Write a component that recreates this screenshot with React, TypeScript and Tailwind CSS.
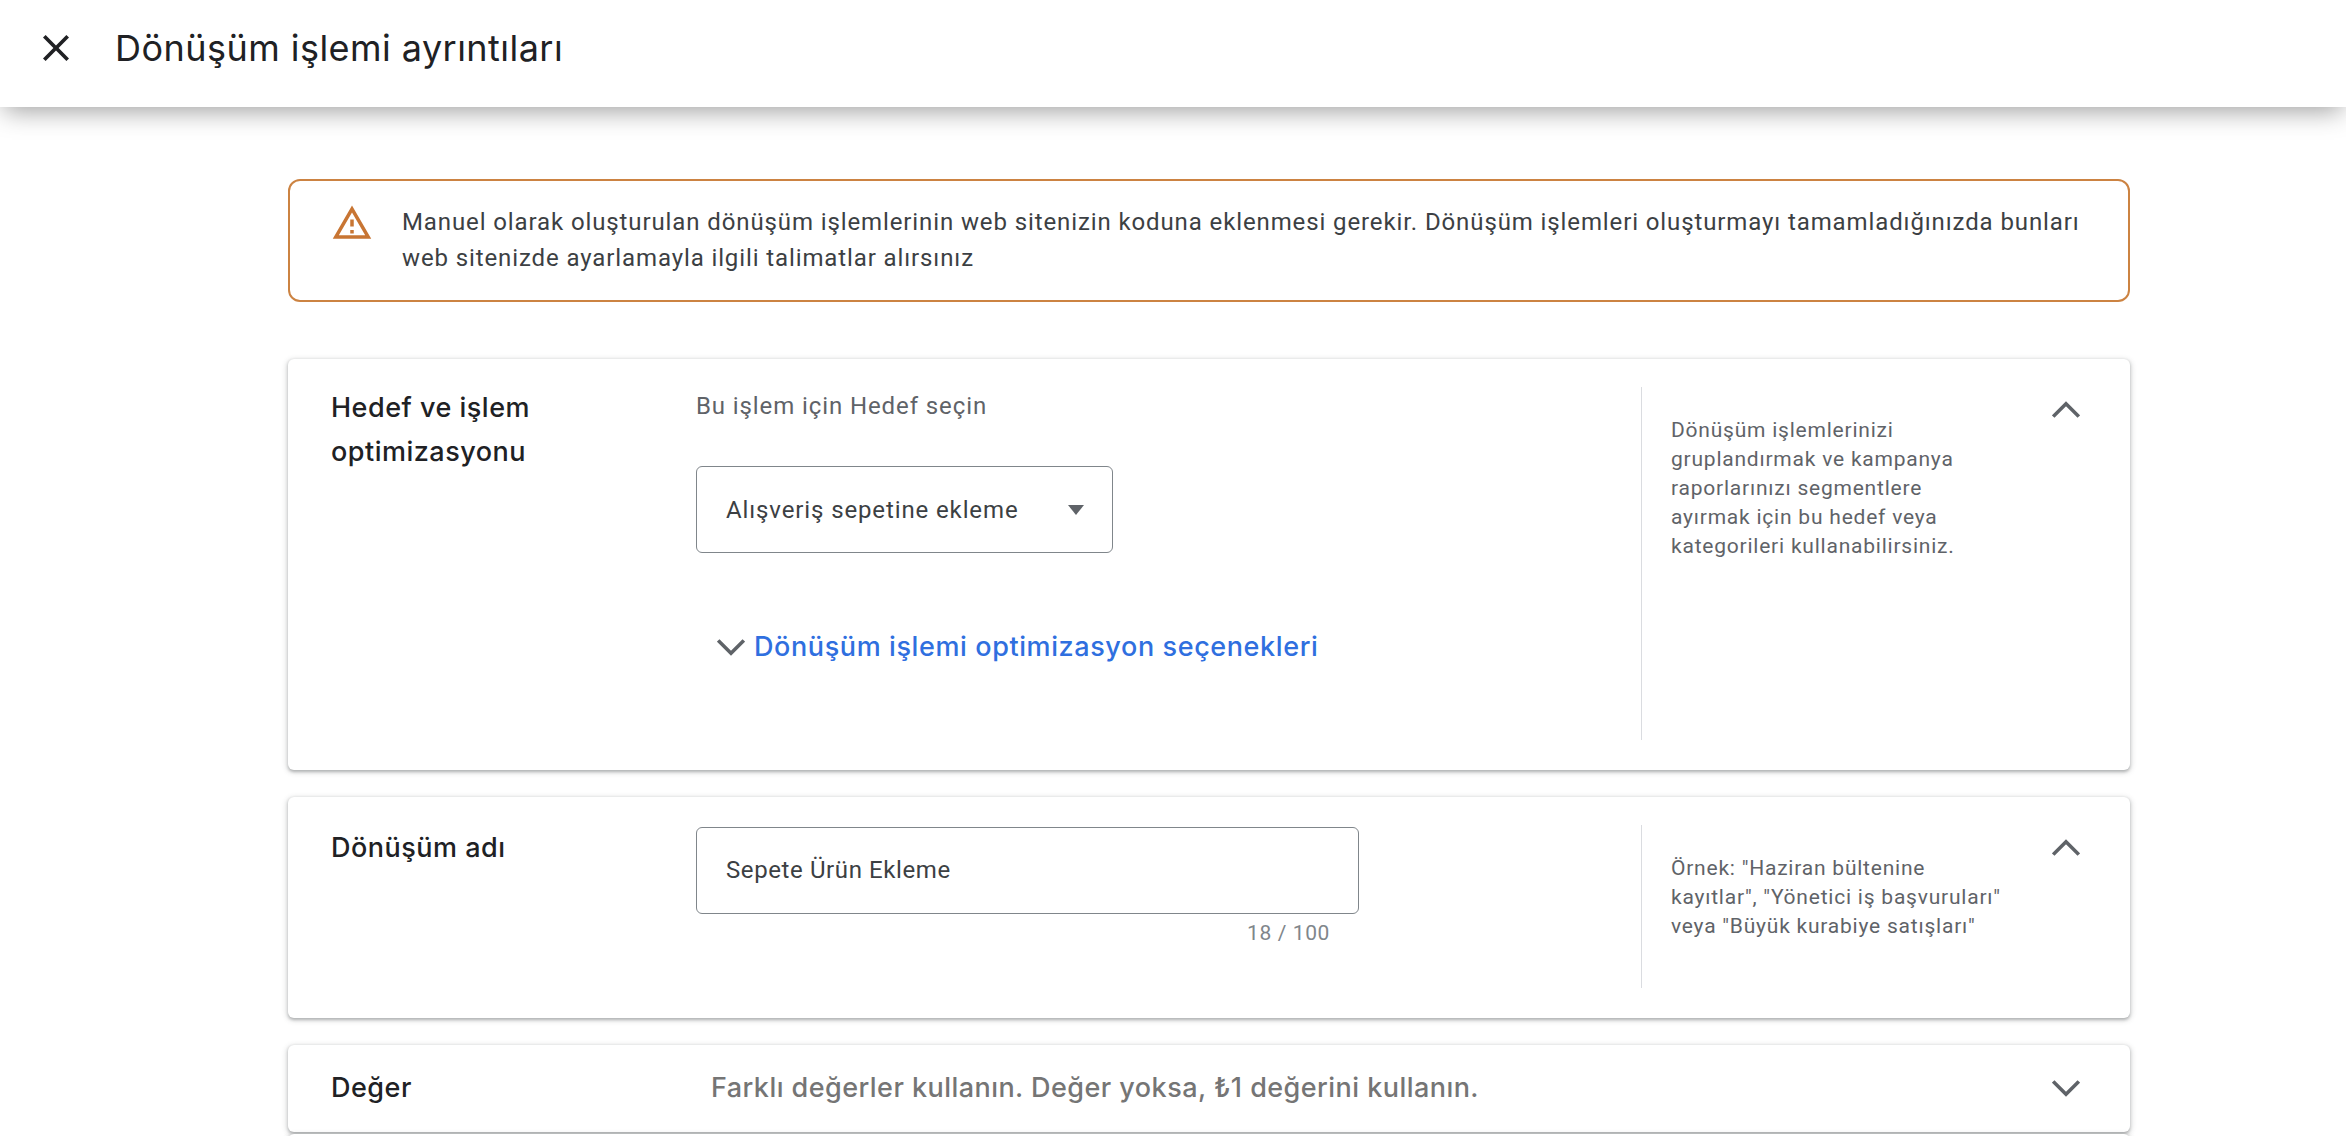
const roboto = "font-['Roboto',sans-serif]";
const display = "font-['Inter',sans-serif]";
const cardShadow = "shadow-[0_1.5px_3px_rgba(60,64,67,0.3),0_1.5px_5px_1.5px_rgba(60,64,67,0.15)]";

function Chevron({ up = false, className = "" }: { up?: boolean; className?: string }) {
  return (
    <svg viewBox="0 0 28 17" className={`h-[17px] w-[28px] shrink-0 ${className}`} fill="none" stroke="#5f6368" strokeWidth="3.6" aria-hidden>
      <polyline points={up ? "1.2,15.6 14,2.8 26.8,15.6" : "1.2,1.4 14,14.2 26.8,1.4"} />
    </svg>
  );
}

function Help({ lines }: { lines: string[] }) {
  return (
    <div className="mb-[30px] mt-[28px] w-[411px] shrink-0 border-l-[1.5px] border-[#dadce0] pl-[29px] pt-[29px]">
      <p className={`${roboto} text-[21px] leading-[29px] tracking-[0.78px] text-[#5f6368]`}>
        {lines.map((l) => (
          <span key={l} className="block whitespace-nowrap">{l}</span>
        ))}
      </p>
    </div>
  );
}

export default function App() {
  return (
    <div className={`${roboto} h-[1136px] overflow-hidden bg-white`}>
      <header className="flex h-[107px] items-center gap-[46px] bg-white pb-[11px] pl-[43px] shadow-[0_8px_24px_-4px_rgba(0,0,0,0.38)]">
        <svg viewBox="5 5 14 14" className="size-[26px]" fill="#202124" aria-hidden>
          <path d="M19 6.41L17.59 5 12 10.59 6.41 5 5 6.41 10.59 12 5 17.59 6.41 19 12 13.41 17.59 19 19 17.59 13.41 12z" />
        </svg>
        <h1 className={`${display} text-[36px] font-normal tracking-[0.46px] text-[#202124]`}>Dönüşüm işlemi ayrıntıları</h1>
      </header>

      <main className="ml-[288px] mt-[72px] flex w-[1842px] flex-col gap-[27px]">
        <div className="mb-[30px] flex h-[123px] items-start rounded-[12px] border-2 border-[#cc8342] pl-[42px] pt-[21px]">
          <svg viewBox="0 0 24 24" className="-ml-[1px] size-[42px] shrink-0" fill="#c87533" aria-hidden>
            <path d="M1 21h22L12 2 1 21zm3.47-2L12 5.99 19.53 19H4.47zM11 16h2v2h-2zm0-6h2v4h-2z" />
          </svg>
          <p className="ml-[29px] mt-[2px] whitespace-nowrap text-[24px] leading-[36px] tracking-[0.89px] text-[#3c4043]">
            Manuel olarak oluşturulan dönüşüm işlemlerinin web sitenizin koduna eklenmesi gerekir. Dönüşüm işlemleri oluşturmayı tamamladığınızda bunları
            <br />
            web sitenizde ayarlamayla ilgili talimatlar alırsınız
          </p>
        </div>

        <section className={`flex h-[411px] rounded-[6px] bg-white pl-[43px] ${cardShadow}`}>
          <h2 className={`${display} mt-[27px] w-[365px] shrink-0 text-[27px] font-medium leading-[44px] tracking-[0.5px] text-[#202124]`}>
            Hedef ve işlem
            <br />
            optimizasyonu
          </h2>
          <div className="w-[945px] shrink-0 pt-[32px]">
            <p className="text-[24px] leading-[30px] tracking-[0.9px] text-[#5f6368]">Bu işlem için Hedef seçin</p>
            <div className="mt-[45px] flex h-[87px] w-[417px] items-center justify-between rounded-[6px] border-[1.5px] border-[#80868b] pl-[29px] pr-[28px]">
              <span className="text-[24px] tracking-[0.88px] text-[#3c4043]">Alışveriş sepetine ekleme</span>
              <span className="h-0 w-0 border-x-[8.5px] border-t-[10px] border-x-transparent border-t-[#5f6368]" />
            </div>
            <div className="mt-[74px] flex items-center gap-[9px] pl-[21px]">
              <Chevron />
              <span className={`${display} text-[27px] font-medium tracking-[0.6px] text-[#2f6fdf]`}>Dönüşüm işlemi optimizasyon seçenekleri</span>
            </div>
          </div>
          <Help
            lines={[
              "Dönüşüm işlemlerinizi",
              "gruplandırmak ve kampanya",
              "raporlarınızı segmentlere",
              "ayırmak için bu hedef veya",
              "kategorileri kullanabilirsiniz.",
            ]}
          />
          <Chevron up className="mt-[42px]" />
        </section>

        <section className={`flex h-[221px] rounded-[6px] bg-white pl-[43px] ${cardShadow}`}>
          <h2 className={`${display} mt-[29px] w-[365px] shrink-0 text-[27px] font-medium leading-[44px] tracking-[0.5px] text-[#202124]`}>Dönüşüm adı</h2>
          <div className="w-[945px] shrink-0 pt-[30px]">
            <div className="flex h-[87px] w-[663px] items-center rounded-[6px] border-[1.5px] border-[#80868b] pb-[2px] pl-[29px]">
              <span className="text-[24px] tracking-[0.6px] text-[#3c4043]">Sepete Ürün Ekleme</span>
            </div>
            <p className="mt-[5px] w-[634px] text-right text-[21px] leading-[28px] tracking-[0.6px] text-[#80868b]">18 / 100</p>
          </div>
          <Help lines={['Örnek: "Haziran bültenine', 'kayıtlar", "Yönetici iş başvuruları"', 'veya "Büyük kurabiye satışları"']} />
          <Chevron up className="mt-[42px]" />
        </section>

        <section className={`flex h-[87px] items-center rounded-[6px] bg-white pl-[43px] pr-[50px] ${cardShadow}`}>
          <h2 className={`${display} w-[380px] shrink-0 text-[27px] font-medium tracking-[0.5px] text-[#202124]`}>Değer</h2>
          <p className={`${display} flex-1 text-[27px] font-medium tracking-[0.45px] text-[#757575]`}>Farklı değerler kullanın. Değer yoksa, ₺1 değerini kullanın.</p>
          <Chevron />
        </section>

        <section className={`-mt-[25px] h-[40px] rounded-[6px] bg-white ${cardShadow}`} />
      </main>
    </div>
  );
}
